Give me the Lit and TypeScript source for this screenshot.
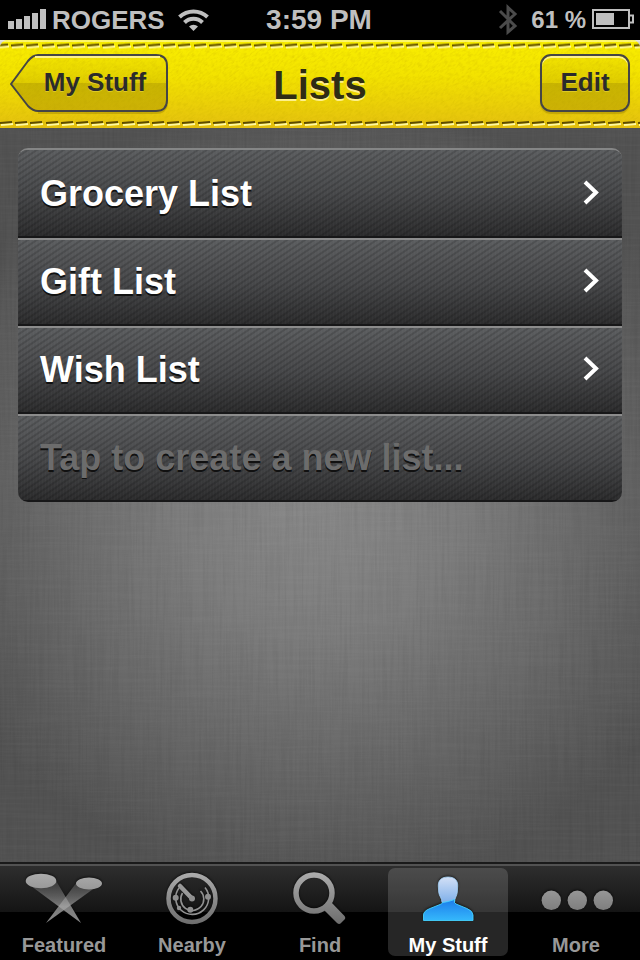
import { LitElement, html, css, svg } from "lit";
import { customElement, state } from "lit/decorators.js";

const featuredIcon = svg`
  <defs>
    <linearGradient id="cone" x1="0" y1="14" x2="0" y2="55" gradientUnits="userSpaceOnUse">
      <stop offset="0" stop-color="#888" stop-opacity=".3"/><stop offset=".6" stop-color="#aaa" stop-opacity=".7"/><stop offset="1" stop-color="#888"/>
    </linearGradient>
  </defs>
  <path d="M27 18 L51 11 L77 55 Z" fill="url(#cone)"/>
  <path d="M92 19 L73 14 L42 55 Z" fill="url(#cone)"/>
  <ellipse cx="37" cy="13" rx="15.3" ry="7.3" fill="url(#grey)"/>
  <ellipse cx="85" cy="15.500" rx="13" ry="6" fill="url(#grey)"/>`;

const nearbyIcon = svg`
  <circle cx="60" cy="30.500" r="23.500" fill="none" stroke="url(#grey)" stroke-width="4.500"/>
  <g fill="none" stroke="#929292" stroke-width="1.600">
    <path d="M47 20 A16.500 16.500 0 1 0 73 19.500"/>
    <path d="M50.500 25 A11.500 11.500 0 1 0 68.500 23"/>
  </g>
  <path d="M48 18 L60 30.500" stroke="#999" stroke-width="4.500" stroke-linecap="round"/>
  <g fill="#8f8f8f">
    <circle cx="60" cy="30.500" r="3"/><circle cx="43.700" cy="29.700" r="3"/><circle cx="76" cy="28.700" r="3"/>
    <circle cx="58.300" cy="41.700" r="3"/><circle cx="47" cy="40" r="2.200"/>
  </g>`;

const findIcon = svg`
  <circle cx="54" cy="25" r="18" fill="none" stroke="url(#grey)" stroke-width="5.500"/>
  <path d="M71.500 34.500 L84.500 48 Q86 50 84.500 51.500 L80.500 55.500 Q79 56.500 77 55 L64.500 42.500 Z" fill="url(#grey)"/>`;

const personIcon = svg`
  <defs>
    <linearGradient id="face" x1="0" y1="0" x2="0" y2="1">
      <stop offset="0" stop-color="#d3e0f6"/><stop offset="1" stop-color="#7fb0ea"/>
    </linearGradient>
    <linearGradient id="body" x1="0" y1="0" x2="0" y2="1">
      <stop offset="0" stop-color="#1c7ceb"/><stop offset="1" stop-color="#35b8fb"/>
    </linearGradient>
  </defs>
  <path d="M60 9 C66 9 70 12 69.700 18 L69.300 24 C69 28 66.500 30 66.500 34.500 L54 34.500 C54 30 51 28 50.700 24 L50.300 18 C50 12 54 9 60 9 Z" fill="url(#face)" stroke="#a6d4fa" stroke-width=".8"/>
  <path d="M54.500 34.500 Q60 34 66.500 31.500 Q65.500 35 68 36 L79 40.500 Q85 43 85 47 L85 52.500 L35.500 52.500 L35.500 47 Q35.500 43 42 40.500 L52 36.500 Q54 36 54.500 34.500 Z" fill="url(#body)" stroke="#45d2ff" stroke-width=".9"/>`;

const moreIcon = svg`
  <g fill="url(#grey)"><circle cx="35.300" cy="32.300" r="9.700"/><circle cx="61.300" cy="32.300" r="9.700"/><circle cx="87.300" cy="32.300" r="9.700"/></g>`;

const TABS = [
  { label: "Featured", icon: featuredIcon },
  { label: "Nearby", icon: nearbyIcon },
  { label: "Find", icon: findIcon },
  { label: "My Stuff", icon: personIcon },
  { label: "More", icon: moreIcon },
];

@customElement("status-bar")
class StatusBar extends LitElement {
  static styles = css`
    :host {
      display: grid;
      grid-template-columns: 1fr auto 1fr;
      align-items: center;
      height: 40px;
      padding: 0 8px;
      background: #000;
      color: #bfbfbf;
      font-weight: bold;
    }
    svg { display: block; flex: none; overflow: visible; }
    .left, .right { display: flex; align-items: center; }
    .right { justify-content: flex-end; }
    .carrier { font-size: 26px; margin: 0 13px 0 6px; }
    .time { font-size: 28px; padding-right: 2px; }
    .charge { font-size: 24px; margin: 0 6px 0 14px; white-space: nowrap; }
  `;
  render() {
    return html`
      <div class="left">
        <svg width="38" height="40" fill="#bfbfbf" role="img" aria-label="Signal strength">
          <path d="M0 21h6v8h-6z M8 19h6v10h-6z M16 16h6v13h-6z M24 13h6v16h-6z M32 9h6v20h-6z"/>
        </svg>
        <span class="carrier">ROGERS</span>
        <svg width="32" height="40" fill="none" stroke="#bfbfbf" stroke-width="4" role="img" aria-label="Wi-Fi">
          <path d="M1.500 17 A20.500 20.500 0 0 1 29.500 17"/>
          <path d="M6.500 22.500 A12.700 12.700 0 0 1 24.500 22.500"/>
          <path d="M15.500 31 L11 26.500 A6.500 6.500 0 0 1 20 26.500 Z" fill="#bfbfbf" stroke="none"/>
        </svg>
      </div>
      <span class="time">3:59 PM</span>
      <div class="right">
        <svg width="18" height="40" fill="none" stroke="#4b4b4b" stroke-width="3" role="img" aria-label="Bluetooth">
          <path d="M1 11 L16 26 L9 32 L9 7.500 L16 14 L1 28"/>
        </svg>
        <span class="charge">61 %</span>
        <svg width="40" height="40" role="img" aria-label="Battery">
          <path d="M1 10h36v18h-36z M38 15.500h3v7h-3" fill="none" stroke="#bfbfbf" stroke-width="2"/>
          <path d="M4 13h18v12h-18z" fill="#bfbfbf"/>
        </svg>
      </div>`;
  }
}

@customElement("nav-header")
class NavHeader extends LitElement {
  static styles = css`
    :host { display: block; background: linear-gradient(#e8e8e8, #505050 20px); }
    .bar {
      position: relative;
      display: grid;
      grid-template-columns: 1fr auto 1fr;
      align-items: center;
      height: 88px;
      box-sizing: border-box;
      padding: 0 10px 2px;
      border-radius: 8px 8px 0 0;
      overflow: hidden;
      background: linear-gradient(#f9ee00, #f3e300 40%, #e4c00f);
    }
    .cloth { position: absolute; inset: 0; width: 100%; height: 100%; pointer-events: none; }
    h1 {
      position: relative;
      margin: 0;
      padding-top: 4px;
      font-size: 40px;
      line-height: 46px;
      color: #2f2c14;
      text-shadow: 0 2px #fdf08c;
    }
    button {
      position: relative;
      height: 58px;
      box-sizing: border-box;
      font: bold 26px/30px "Liberation Sans", Arial, sans-serif;
      color: #2b2b2b;
      background: none;
      border: 0;
      padding: 0;
      text-shadow: 0 1px rgba(255, 240, 100, 0.4);
    }
    .back { justify-self: start; width: 158px; padding: 0 20px 2px 32px; }
    .back svg { position: absolute; inset: 0; }
    .back span { position: relative; }
    .edit {
      justify-self: end;
      width: 90px;
      padding-bottom: 2px;
      border: 2px solid #454545;
      border-radius: 11px;
      background: linear-gradient(rgba(210, 190, 0, 0.1), rgba(190, 170, 0, 0.35) 50%, rgba(160, 140, 0, 0.5) 50%, rgba(170, 145, 0, 0.45));
      box-shadow: inset 0 2px #fdf28c, 0 2px 1px rgba(150, 125, 0, 0.45);
    }
  `;
  render() {
    const xs = [0, 15, 30, 46, 61];
    return html`
      <div class="bar">
        <svg class="cloth" aria-hidden="true">
          <defs>
            <pattern id="stitch" width="76" height="8" patternUnits="userSpaceOnUse">
              ${xs.map((x) => svg`
                <path d="M${x + 1} 6 L${x + 13} 5" stroke="#fff9a0" stroke-width="2"/>
                <path d="M${x} 4 L${x + 12} 3" stroke="#5d4c00" stroke-width="2.200"/>`)}
            </pattern>
            <filter id="weave" x="0" y="0" width="100%" height="100%">
              <feTurbulence type="fractalNoise" baseFrequency=".22 .6" numOctaves="3" seed="4"/>
              <feColorMatrix values="0 0 0 0 .6  0 0 0 0 .45  0 0 0 0 0  2.2 0 0 0 -.95"/>
            </filter>
          </defs>
          <g transform="rotate(-38)"><rect x="-80" y="-10" width="2000" height="1400" filter="url(#weave)" opacity=".36"/></g>
          <rect width="100%" height="2" fill="#fffbb0" opacity=".6"/>
          <g transform="translate(-4 1.500)"><rect width="120%" height="8" fill="url(#stitch)"/></g>
          <g transform="translate(0 79)"><rect width="120%" height="8" fill="url(#stitch)"/></g>
        </svg>
        <button class="back" type="button">
          <svg width="158" height="60" viewBox="0 0 158 60" aria-hidden="true">
            <defs>
              <linearGradient id="gloss" x1="0" y1="0" x2="0" y2="1">
                <stop offset="0" stop-color="#d2be00" stop-opacity=".1"/><stop offset=".5" stop-color="#beaa00" stop-opacity=".35"/>
                <stop offset=".5" stop-color="#a08c00" stop-opacity=".5"/><stop offset="1" stop-color="#aa9100" stop-opacity=".45"/>
              </linearGradient>
            </defs>
            <path d="M28 59 H146 Q155 59 157 51" fill="none" stroke="#967d00" stroke-opacity=".4" stroke-width="2"/>
            <path d="M1 30 L18 7 Q23 1 28 1 H146 Q157 1 157 12 V46 Q157 57 146 57 H28 Q23 57 18 52 Z" fill="url(#gloss)" stroke="#454545" stroke-width="2" stroke-linejoin="round"/>
            <path d="M25 3 H150" stroke="#fdf28c" stroke-width="2"/>
          </svg>
          <span>My Stuff</span>
        </button>
        <h1>Lists</h1>
        <button class="edit" type="button">Edit</button>
      </div>`;
  }
}

@customElement("list-card")
class ListCard extends LitElement {
  static styles = css`
    :host {
      display: block;
      border-top: 2px solid #858686;
      border-radius: 10px;
      overflow: hidden;
    }
    ul { list-style: none; margin: 0; padding: 0; }
    .row {
      display: flex;
      align-items: center;
      justify-content: space-between;
      height: 88px;
      box-sizing: border-box;
      padding: 2px 23px 0 22px;
      border-bottom: 2px solid #171718;
      background:
        repeating-linear-gradient(146deg, rgba(0, 0, 0, 0.15) 0 1px, transparent 2px 4px, rgba(0, 0, 0, 0.15) 5px),
        repeating-linear-gradient(90deg, rgba(255, 255, 255, 0.02) 0 1px, transparent 1px 3px),
        linear-gradient(#5c5e60, #48494b 50%, #2c2c2d);
      color: #fff;
      font: bold 36px/42px "Liberation Sans", Arial, sans-serif;
      text-decoration: none;
      text-shadow: 0 2px #111;
    }
    li + li .row { border-top: 2px solid #8c8c8c; padding-top: 0; }
    svg { display: block; flex: none; margin-bottom: 2px; }
    input {
      width: 100%;
      height: 60px;
      padding: 0;
      border: 0;
      outline: 0;
      background: none;
      color: #fff;
      font: inherit;
      text-shadow: inherit;
    }
    input::placeholder { color: #6c6c6c; opacity: 1; }
  `;
  render() {
    return html`
      <ul>
        ${["Grocery List", "Gift List", "Wish List"].map((name) => html`
          <li><a class="row" href="#">
            <span>${name}</span>
            <svg width="16" height="26" fill="none" stroke="#fff" stroke-width="4" aria-hidden="true"><path d="M2 2 L13 12.500 L2 23"/></svg>
          </a></li>`)}
        <li><label class="row"><input type="text" aria-label="New list name" placeholder="Tap to create a new list..."></label></li>
      </ul>`;
  }
}

@customElement("tab-bar")
class TabBar extends LitElement {
  @state() private current = "My Stuff";

  static styles = css`
    :host { display: block; }
    nav {
      display: grid;
      grid-template-columns: repeat(5, 1fr);
      padding: 2px 0 4px;
      border-top: 2px solid #1a1a1a;
      background: linear-gradient(#525252 2px, #2e2e2e 2px, #141414 48px, #000 48px);
    }
    button {
      display: flex;
      flex-direction: column;
      align-items: center;
      height: 88px;
      margin: 2px 4px 0;
      padding: 0;
      border: 0;
      border-radius: 7px;
      background: none;
      color: #989898;
      font: bold 20px/24px "Liberation Sans", Arial, sans-serif;
    }
    .on { color: #fff; background: rgba(255, 255, 255, 0.15); }
    svg { display: block; flex: none; filter: drop-shadow(0 -1px 1px rgba(0, 0, 0, 0.6)); }
    span { padding-top: 5px; }
  `;
  render() {
    return html`
      <nav>
        ${TABS.map((t) => html`
          <button type="button" class=${t.label === this.current ? "on" : ""} @click=${() => (this.current = t.label)}>
            <svg width="120" height="60" viewBox="0 0 120 60" aria-hidden="true">
              <defs><linearGradient id="grey" x1="0" y1="5" x2="0" y2="57" gradientUnits="userSpaceOnUse">
                <stop offset="0" stop-color="#acacac"/><stop offset="1" stop-color="#6c6c6c"/>
              </linearGradient></defs>
              ${t.icon}
            </svg>
            <span>${t.label}</span>
          </button>`)}
      </nav>`;
  }
}

@customElement("app-root")
class AppRoot extends LitElement {
  static styles = css`
    :host {
      display: flex;
      flex-direction: column;
      min-height: 100vh;
      font-family: "Liberation Sans", Arial, sans-serif;
    }
    main {
      position: relative;
      flex: 1;
      padding: 20px 18px;
      background: radial-gradient(ellipse 64% 54% at 50% 50%, #898989, #7c7c7c 35%, #666 70%, #525252);
    }
    .linen { position: absolute; inset: 0; width: 100%; height: 100%; }
    list-card { position: relative; }
  `;
  render() {
    return html`
      <status-bar></status-bar>
      <nav-header></nav-header>
      <main>
        <svg class="linen" aria-hidden="true">
          <filter id="warp" x="0" y="0" width="100%" height="100%">
            <feTurbulence type="fractalNoise" baseFrequency=".4 .012" numOctaves="3" seed="2"/>
            <feColorMatrix values="0 0 0 0 0  0 0 0 0 0  0 0 0 0 0  1.600 0 0 0 -.6"/>
          </filter>
          <filter id="weft" x="0" y="0" width="100%" height="100%">
            <feTurbulence type="fractalNoise" baseFrequency=".012 .4" numOctaves="3" seed="7"/>
            <feColorMatrix values="0 0 0 0 1  0 0 0 0 1  0 0 0 0 1  1.600 0 0 0 -.6"/>
          </filter>
          <rect width="100%" height="100%" filter="url(#warp)" opacity=".06"/>
          <rect width="100%" height="100%" filter="url(#weft)" opacity=".03"/>
        </svg>
        <list-card></list-card>
      </main>
      <tab-bar></tab-bar>`;
  }
}
